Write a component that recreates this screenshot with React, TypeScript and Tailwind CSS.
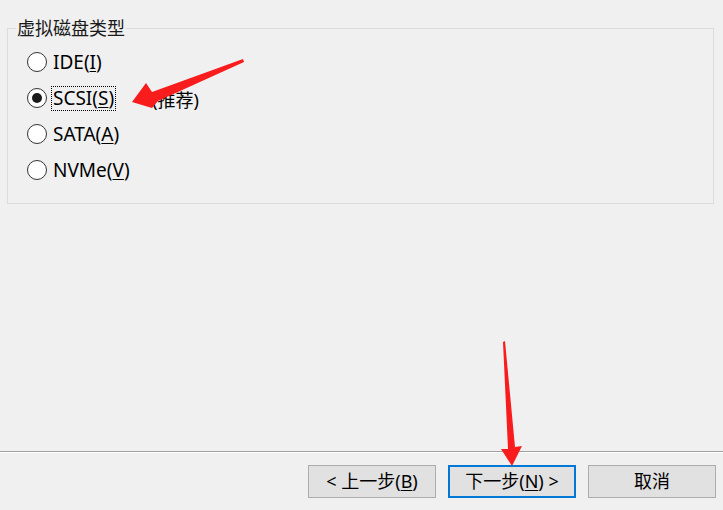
import React, { useState } from 'react';

const font = { fontFamily: '"Noto Sans", "Noto Sans CJK SC", sans-serif' };

const options = [
    { key: 'ide', label: 'IDE(', hot: 'I' },
    { key: 'scsi', label: 'SCSI(', hot: 'S' },
    { key: 'sata', label: 'SATA(', hot: 'A' },
    { key: 'nvme', label: 'NVMe(', hot: 'V' },
];

const Radio = ({ checked }: { checked: boolean }) => (
    <span className="w-[20px] h-[20px] rounded-full border border-[#333333] bg-white flex items-center justify-center shrink-0">
        {checked && <span className="w-[10px] h-[10px] rounded-full bg-[#1a1a1a]" />}
    </span>
);

const App = () => {
    const [selected, setSelected] = useState('scsi');

    return (
        <div className="relative w-[723px] h-[510px] bg-[#f0f0f0] flex flex-col text-black overflow-hidden" style={font}>
            <fieldset className="ml-[7px] mr-[9px] mt-[18px] h-[186px] border border-[#dcdcdc] pl-[8px] pt-[6px]">
                <legend className="px-[1px] text-[18px] leading-[20px] text-[#1a1a1a]">虚拟磁盘类型</legend>
                <div className="ml-[11px] flex flex-col">
                    {options.map((o) => (
                        <div key={o.key} className="h-9 flex items-center cursor-default" onClick={() => setSelected(o.key)}>
                            <Radio checked={selected === o.key} />
                            <span
                                className={
                                    'ml-[4px] px-[1px] text-[19px] leading-[23px] border border-dotted ' +
                                    (selected === o.key ? 'border-black' : 'border-transparent')
                                }
                            >
                                {o.label}
                                <span className="underline underline-offset-2">{o.hot}</span>)
                            </span>
                            {o.key === 'scsi' && <span className="ml-[36px] text-[18px] mt-[4px]">(推荐)</span>}
                        </div>
                    ))}
                </div>
            </fieldset>

            <div className="flex-1" />

            <div className="h-px bg-[#a0a0a0]" />
            <div className="h-px bg-white" />
            <div className="flex justify-end gap-[12px] pr-[7px] pt-[12px] pb-[12px] text-[18px]">
                <button className="w-[128px] h-[33px] bg-[#e1e1e1] border border-[#adadad]">
                    &lt; 上一步(<span className="underline underline-offset-2">B</span>)
                </button>
                <button className="w-[128px] h-[33px] bg-[#e1e1e1] border-2 border-[#0078d7]">
                    下一步(<span className="underline underline-offset-2">N</span>) &gt;
                </button>
                <button className="w-[128px] h-[33px] bg-[#e1e1e1] border border-[#adadad]">
                    取消
                </button>
            </div>

            {/* annotation arrows drawn over the dialog */}
            <svg className="absolute inset-0 pointer-events-none" width="723" height="510">
                <polygon
                    fill="#f81c1c"
                    points="243,59 244,62 158,101 152,108 132,102 146,83 152,92"
                />
                <polygon
                    fill="#f81c1c"
                    points="503,342 505,341 515,447 522,446 512,466 501,449 508,449"
                />
            </svg>
        </div>
    );
};

export default App;
